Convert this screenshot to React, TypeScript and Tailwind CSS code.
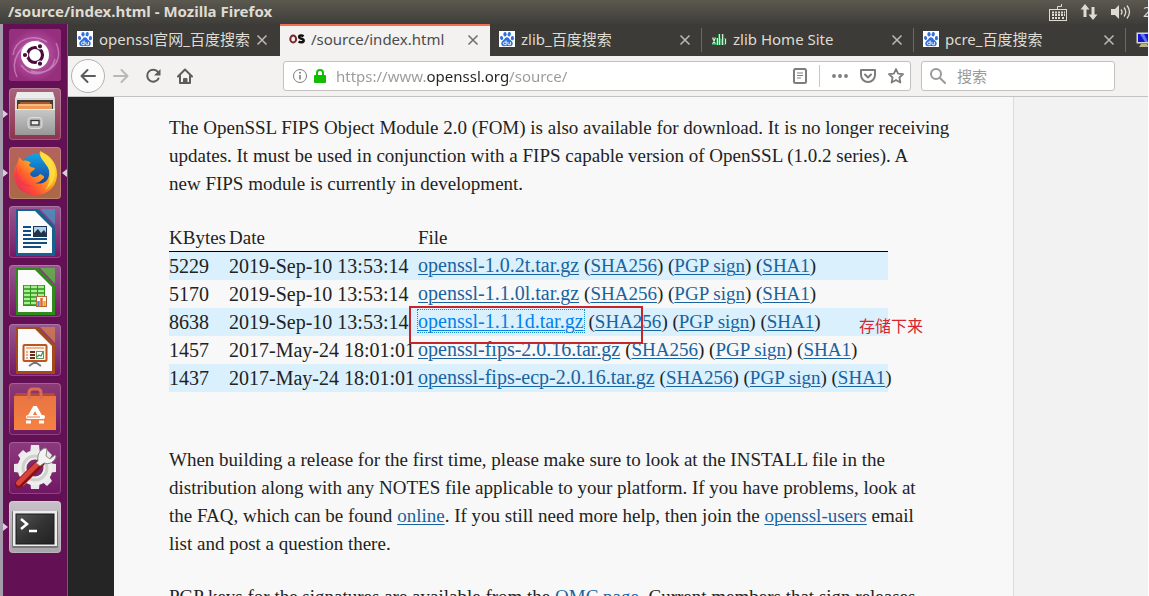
import React from "react";

const Paw = () => (
  <svg viewBox="0 0 16 16" className="size-4 shrink-0" aria-hidden="true">
    <rect width="16" height="16" fill="#fff" />
    <g fill="#2f6fe0">
      <ellipse cx="2.6" cy="7" rx="1.6" ry="2.1" transform="rotate(-12 2.6 7)" />
      <ellipse cx="6" cy="3.2" rx="1.6" ry="2.2" />
      <ellipse cx="10.2" cy="3.2" rx="1.6" ry="2.2" transform="rotate(10 10.2 3.2)" />
      <ellipse cx="13.4" cy="7.2" rx="1.6" ry="2.1" transform="rotate(8 13.4 7.2)" />
      <path d="M8 6.3c1.7 0 2.3 1.7 3.4 2.8 1.3 1.2 2.6 2.1 2.3 4-.3 1.800-1.800 2.300-3.200 2.100-1.700-.3-3.300-.3-5 0-1.500.2-2.900-.4-3.200-2.100-.3-1.900 1-2.800 2.200-4C5.700 8 6.200 6.300 8 6.300z" />
    </g>
    <path d="M7.200 9.500v4.200H5.700a1.300 1.300 0 0 1 0-2.600h1.500M8.900 11v1.900q0 .9 1 .9h1.500V11" fill="none" stroke="#fff" strokeWidth=".9" />
  </svg>
);

const OsMark = () => (
  <svg viewBox="0 0 16 16" className="size-4 shrink-0" aria-hidden="true">
    <ellipse cx="4.200" cy="8" rx="2.900" ry="3.500" fill="none" stroke="#7c2529" strokeWidth="2" />
    <path d="M14.600 5.300c-1.600-1.100-4.500-1.100-4.500.8 0 2.100 4.600 1.300 4.600 3.500 0 2.100-3.400 2.100-5.100.9" fill="none" stroke="#111" strokeWidth="2.500" />
  </svg>
);

const ZlibMark = () => (
  <svg viewBox="0 0 16 16" className="size-4 shrink-0" aria-hidden="true" fill="none">
    <path d="M1.500 6.500l3 7M4.500 6.500l-3 7M6.500 7v7M8.500 3v11M11.500 3v11M14.500 7v6" stroke="#d5ecd9" strokeWidth="1.200" />
    <path d="M.8 6.500h4M1 13.500h4M5.500 7v7M7.500 3v11M9.500 7v7M12.700 3v11M12 13.500h3M12 7.500h3M10.500 8v6" stroke="#3a9a58" strokeWidth="1" />
  </svg>
);

const MonitorMark = () => (
  <svg viewBox="0 0 16 16" className="size-4 shrink-0" aria-hidden="true">
    <rect x=".5" y=".5" width="15" height="11" fill="#d6d6cc" />
    <rect x="2" y="2" width="12" height="8" fill="#1414c8" />
    <path d="M4 2h4l4 8H9z" fill="#5b78ee" />
    <path d="M5 12h6l2 3H3z" fill="#b9b58c" />
  </svg>
);

const Cross = () => (
  <svg viewBox="0 0 12 12" className="size-3" fill="none" stroke="currentColor" strokeWidth="1.500" aria-hidden="true">
    <path d="M1.500 1.500l9 9M10.500 1.500l-9 9" />
  </svg>
);

type TabInfo = { title: string; mark: React.ReactNode; active?: boolean; line?: boolean };
const tabs: TabInfo[] = [
  { title: "openssl官网_百度搜索", mark: <Paw /> },
  { title: "/source/index.html", mark: <OsMark />, active: true },
  { title: "zlib_百度搜索", mark: <Paw />, line: true },
  { title: "zlib Home Site", mark: <ZlibMark />, line: true },
  { title: "pcre_百度搜索", mark: <Paw />, line: true },
];

function Tab({ title, mark, active, line }: TabInfo) {
  return (
    <div
      className={
        active
          ? "flex h-8 w-[210px] shrink-0 items-center bg-[#f3f2f1] pr-[7px] pl-[9px] text-[#4c4c4c] shadow-[inset_0_2px_0_#f07050]"
          : "flex h-8 w-[212px] shrink-0 items-center pr-2 pl-[9px] text-[#dfdbd2]"
      }
    >
      <button type="button" className="flex min-w-0 flex-1 items-center gap-1.5 pb-0.5 text-left text-[15px] leading-6 whitespace-nowrap">
        {mark}
        {title}
      </button>
      <button type="button" aria-label={"Close " + title} className="flex size-5 items-center justify-center opacity-80">
        <Cross />
      </button>
      <span className={line ? "ml-1.5 -mr-2 h-6 w-px bg-[#6b6963]" : "hidden"} />
    </div>
  );
}

const UbuntuIcon = () => (
  <svg viewBox="0 0 52 52" className="size-full">
    <defs>
      <radialGradient id="dash"><stop offset="0" stopColor="#c87abd" /><stop offset=".65" stopColor="#a84594" /><stop offset="1" stopColor="#962f7e" /></radialGradient>
    </defs>
    <rect width="52" height="52" fill="url(#dash)" />
    <path d="M4 26C6 10 24 4 38 13M47 14C56 32 40 48 22 42M8 48C0 32 12 12 30 12M46 30C42 46 22 50 12 36" fill="none" stroke="#e5b5dd" strokeOpacity=".5" strokeWidth="1.500" />
    <circle cx="26" cy="26" r="14" fill="#fff" />
    <circle cx="26" cy="26" r="7.500" fill="none" stroke="#4b0b3c" strokeWidth="3.200" />
    <g fill="#4b0b3c" stroke="#fff" strokeWidth="1.200">
      <circle cx="16" cy="26" r="2.700" /><circle cx="31" cy="17.300" r="2.700" /><circle cx="31" cy="34.700" r="2.700" />
    </g>
  </svg>
);

const FilesIcon = () => (
  <svg viewBox="0 0 52 52" className="size-full">
    <defs>
      <linearGradient id="cab" x2="0" y2="1"><stop offset="0" stopColor="#c9c9c9" /><stop offset="1" stopColor="#989898" /></linearGradient>
    </defs>
    <path d="M8 4h36l2 7H6z" fill="#ececec" />
    <path d="M6 10h40v11H6z" fill="#d9d9d9" />
    <path d="M8 12h36v9H8z" fill="#433d38" />
    <path d="M11 14h30v2H11z" fill="#a9582a" /><path d="M9 16h34v5H9z" fill="#ee9a56" /><path d="M10 17h32" stroke="#ffdcae" />
    <path d="M6 21h40v26H6z" fill="url(#cab)" />
    <path d="M6 21.500h40" stroke="#eee" />
    <rect x="19" y="29.500" width="14" height="11" rx="3" fill="#bdbdbd" stroke="#dedede" />
    <rect x="22" y="32.500" width="8" height="4.500" fill="#eee" stroke="#333" strokeWidth="1.300" />
  </svg>
);

const FirefoxIcon = () => (
  <svg viewBox="0 0 52 52" className="size-full">
    <defs>
      <linearGradient id="fox" x1="1" x2="0" y1="0" y2="1"><stop offset="0" stopColor="#fff04a" /><stop offset=".4" stopColor="#ffb01c" /><stop offset=".7" stopColor="#ff5034" /><stop offset="1" stopColor="#e01664" /></linearGradient>
      <linearGradient id="globe" x2="0" y2="1"><stop offset="0" stopColor="#13a3e6" /><stop offset="1" stopColor="#173b97" /></linearGradient>
    </defs>
    <circle cx="27" cy="23" r="16" fill="url(#globe)" />
    <path d="M31 4c9 4 17 11 17 23 0 12-9 21-21 21S5 40 5 27c0-5 2-9 4-12l1-5 4 4c3-1 6 0 8 2-3 1-2 3 0 4l4 1c-1 3-4 3-5 6 2 5 8 3 10 0 3 1 5 3 4 4-3 2-4 5-9 5 7 2 13-1 14-8 1-5-1-8-3-10l-1-2-2-3c-3-3-4-6-3-9z" fill="url(#fox)" />
    <path d="M8 15c-2 14 5 23 17 24-9 2-16 0-19-9" fill="#f13754" opacity=".7" />
    <path d="M32 5c7 4 14 10 14 22-1 8-5 13-10 16 7-9 6-21 0-27-4-4-5-7-4-11z" fill="#ffe348" opacity=".75" />
  </svg>
);

function PageIcon({ edge, fold, children }: { edge: string; fold: string; children: React.ReactNode }) {
  return (
    <svg viewBox="0 0 52 52" className="size-full">
      <path d="M7 3h22l17 17v30H7z" fill={edge} />
      <path d="M30 3h16v17z" fill={fold} opacity=".7" />
      <path d="M9 5h17l17 17v25H9z" fill="#fbfbfb" />
      <path d="M30 3l16 17" stroke="#8b3b80" strokeWidth="1.500" />
      {children}
    </svg>
  );
}

const WriterIcon = () => (
  <PageIcon edge="#17618f" fold="#3a9cca">
    <path d="M14 21h8M14 25h8M14 29h8M14 33h24M14 37h24M14 41h18" stroke="#124e80" strokeWidth="2" />
    <rect x="24.500" y="20.500" width="13" height="10" fill="#a9d4f0" stroke="#235" />
    <path d="M25 30v-3l4-4 3 4 3-3 2 3v3z" fill="#234" />
  </PageIcon>
);
const CalcIcon = () => (
  <PageIcon edge="#2f8c1b" fold="#53c737">
    <rect x="14" y="20" width="22" height="21" fill="#2c941b" />
    <path d="M15 22h6M22 22h6M29 22h6M15 26h6M22 26h6M29 26h6M15 30h6M22 30h6M29 30h6M15 34h6M22 34h6M15 38h6M22 38h6" stroke="#a9ef91" strokeWidth="2.500" />
    <rect x="27.500" y="31.500" width="10" height="10" fill="#fff" stroke="#b5683e" />
    <path d="M29.500 41v-5" stroke="#3298dd" strokeWidth="2.500" /><path d="M32.500 41v-8" stroke="#ed641d" strokeWidth="2.500" /><path d="M35.500 41v-5" stroke="#f1a62e" strokeWidth="2.500" />
  </PageIcon>
);
const ImpressIcon = () => (
  <PageIcon edge="#a44a18" fold="#dc8242">
    <rect x="14.500" y="21" width="23" height="16" rx="1" fill="#fff4ec" stroke="#bb571f" strokeWidth="2" />
    <path d="M17 24h18" stroke="#e9a273" strokeWidth="1.500" /><path d="M21 28h5M21 31h5M21 34h5" stroke="#6b2b15" strokeWidth="1.800" /><path d="M17 28h2M17 31h2M17 34h2" stroke="#c86a32" />
    <rect x="27.500" y="27.500" width="7" height="7" fill="#fff" stroke="#68946b" /><path d="M28 33l2-2 2 1 2-4" fill="none" stroke="#2d9440" strokeWidth="1.200" />
    <path d="M26 38v2M26 38l-6 4M26 38l6 4" stroke="#777" strokeWidth="2" />
  </PageIcon>
);

const StoreIcon = () => (
  <svg viewBox="0 0 52 52" className="size-full">
    <defs><linearGradient id="bag" x2="0" y2="1"><stop offset="0" stopColor="#e87443" /><stop offset="1" stopColor="#f68240" /></linearGradient></defs>
    <path d="M7 10h38l2 4H5z" fill="#b64b31" /><path d="M5 13h42v34H5z" fill="url(#bag)" />
    <path d="M20 16v-6q0-4 4-4h4q4 0 4 4v6" fill="none" stroke="#d96d50" strokeWidth="3" />
    <path d="M21 33l5-9 5 9" fill="none" stroke="#fff" strokeWidth="4" strokeLinejoin="bevel" />
    <path d="M19 34h15" stroke="#fff" strokeWidth="4" strokeLinecap="round" /><path d="M18 34h13" stroke="#ec7440" strokeWidth="1" />
    <path d="M17 39h5M30 39h5" stroke="#fff" strokeWidth="3" />
  </svg>
);

const SettingsIcon = () => (
  <svg viewBox="0 0 52 52" className="size-full">
    <g fill="#e9e9e7">
      <path d="M22 3h8l1 9H21zM22 47h8l1-9H21zM5 22v8l9 1V21zM47 22v8l-9 1V21zM9 13l5-5 7 6-7 7zM43 13l-5-5-7 6 7 7zM9 39l5 5 7-6-7-7zM43 39l-5 5-7-6 7-7z" />
    </g>
    <circle cx="26" cy="26" r="13" fill="none" stroke="#eeeeec" strokeWidth="9" />
    <circle cx="26" cy="26" r="12" fill="none" stroke="#d0d0cf" strokeWidth="3" />
    <path d="M10 42l22-22" stroke="#8b1110" strokeWidth="8.500" strokeLinecap="round" />
    <path d="M9.500 41l22-22" stroke="#d9453e" strokeWidth="5" strokeLinecap="round" />
    <path d="M29 19c-1-5 1-11 7-13l2 1-1 7 4 3 5-4 1 1c-1 6-7 9-12 7l-4 3-4-3z" fill="#f3f3f1" stroke="#8a8a88" />
  </svg>
);

const TerminalIcon = () => (
  <svg viewBox="0 0 52 52" className="size-full">
    <defs><linearGradient id="scr" x1="0" y1="0" x2="1" y2="1"><stop offset="0" stopColor="#565656" /><stop offset=".5" stopColor="#333" /><stop offset="1" stopColor="#222" /></linearGradient></defs>
    <rect x="3" y="10" width="46" height="37" rx="1" fill="#777" /><rect x="4" y="10" width="44" height="35" fill="#ededed" />
    <rect x="7" y="13" width="38" height="30" fill="url(#scr)" stroke="#191919" />
    <path d="M12 18l6 5-6 5M20 30h8" fill="none" stroke="#fff" strokeWidth="2.500" />
  </svg>
);

const apps = [
  { name: "Dash", icon: <UbuntuIcon />, tile: "bg-[#a04392]" },
  { name: "Files", icon: <FilesIcon />, tile: "bg-linear-to-b from-[#a6647c] to-[#8c3450]", left: true },
  { name: "Firefox", icon: <FirefoxIcon />, tile: "bg-linear-to-b from-[#b3625e] to-[#ab6846]", left: true, right: true },
  { name: "Writer", icon: <WriterIcon />, tile: "bg-linear-to-b from-[#97578f] to-[#741666]" },
  { name: "Calc", icon: <CalcIcon />, tile: "bg-linear-to-b from-[#97578f] to-[#741666]" },
  { name: "Impress", icon: <ImpressIcon />, tile: "bg-linear-to-b from-[#97578f] to-[#741666]" },
  { name: "Software", icon: <StoreIcon />, tile: "bg-linear-to-b from-[#8d3c77] to-[#6c1560]" },
  { name: "Settings", icon: <SettingsIcon />, tile: "bg-linear-to-b from-[#8d397f] to-[#711665]" },
  { name: "Terminal", icon: <TerminalIcon />, tile: "bg-linear-to-b from-[#c6c2c7] to-[#a9a3aa]", left: true },
];

function Launcher() {
  return (
    <nav className="flex w-[68px] shrink-0 flex-col gap-[7px] border-r border-l-3 border-r-[#855080] border-l-[#a49cac] bg-[#641054] pt-[5px]">
      {apps.map((a) => (
        <div key={a.name} className="flex items-center">
          <svg viewBox="0 0 6 8" className={a.left ? "h-2 w-1.5 text-[#dccbdc]" : "h-2 w-1.5 text-transparent"} aria-hidden="true">
            <path d="M0 0l5 4-5 4z" fill="currentColor" />
          </svg>
          <button type="button" aria-label={a.name} className={"size-[52px] overflow-hidden rounded-[4px] ring-1 ring-white/20 ring-inset " + a.tile}>
            {a.icon}
          </button>
          <svg viewBox="0 0 6 8" className={a.right ? "h-2 w-1.5 text-[#dccbdc]" : "h-2 w-1.5 text-transparent"} aria-hidden="true">
            <path d="M6 0L1 4l5 4z" fill="currentColor" />
          </svg>
        </div>
      ))}
    </nav>
  );
}

function TitleBar() {
  return (
    <header className="flex h-6 shrink-0 items-center justify-between overflow-hidden bg-linear-to-b from-[#5b594f] to-[#3e3d39] pl-2 text-[#dfdbd2]">
      <h1 className="pb-0.5 text-[15px] leading-5 font-bold whitespace-nowrap">/source/index.html - Mozilla Firefox</h1>
      <div className="flex items-center">
        <svg viewBox="0 0 20 20" className="mr-3 size-5" fill="none" stroke="currentColor" aria-hidden="true">
          <path d="M9.500 7V4.500h4V2" /><rect x="1.500" y="7.500" width="17" height="11" />
          <path d="M4 10.500h13M4 13h13M4 16h2M7 16h6M14 16h3" strokeWidth="1.800" strokeDasharray="2 1" />
        </svg>
        <svg viewBox="0 0 18 18" className="mr-[13px] size-[18px]" fill="currentColor" aria-hidden="true">
          <path d="M5 1L.5 6.500h3V14h3V6.500h3zM13 17l4.500-5.500h-3V4h-3v7.500h-3z" />
        </svg>
        <svg viewBox="0 0 20 18" className="mr-3 h-[18px] w-5" fill="none" stroke="currentColor" strokeWidth="1.300" aria-hidden="true">
          <path d="M0 6h4l4-4v14l-4-4H0z" fill="currentColor" stroke="none" />
          <path d="M10 6.500q2 2.500 0 5M13 4.500q3.500 4.500 0 9M16 2.500q5 6.500 0 13" />
        </svg>
        <span className="w-[5px] overflow-hidden text-sm">2</span>
      </div>
    </header>
  );
}

function ToolBar() {
  return (
    <div className="flex h-[41px] shrink-0 items-center border-b border-[#c4c3c1] bg-[#f3f2f1] pr-[33px] pl-[3px] text-[#5c5c5c]">
      <button type="button" aria-label="Back" className="flex size-[34px] items-center justify-center rounded-full border border-[#b3b2b0] bg-[#fcfcfc]">
        <svg viewBox="0 0 16 16" className="size-4" fill="none" stroke="currentColor" strokeWidth="2" strokeLinecap="round" strokeLinejoin="round"><path d="M15 8H1.500M7.500 2l-6 6 6 6" /></svg>
      </button>
      <button type="button" aria-label="Forward" className="ml-2 text-[#b9b8b7]">
        <svg viewBox="0 0 16 16" className="size-4" fill="none" stroke="currentColor" strokeWidth="2" strokeLinecap="round" strokeLinejoin="round"><path d="M1 8h13.500M8.500 2l6 6-6 6" /></svg>
      </button>
      <button type="button" aria-label="Reload" className="ml-4">
        <svg viewBox="0 0 16 16" className="size-4" fill="none" stroke="currentColor" strokeWidth="2"><path d="M13.500 10.500A6 6 0 1 1 13 4" strokeLinecap="round" /><path d="M15.500 1v6.500H9z" fill="currentColor" stroke="none" /></svg>
      </button>
      <button type="button" aria-label="Home" className="ml-4">
        <svg viewBox="0 0 16 16" className="size-4" fill="none" stroke="currentColor" strokeWidth="2" strokeLinecap="round" strokeLinejoin="round"><path d="M1 8.500l7-7 7 7M3 8v7h10V8" /><path d="M7 15v-4h2.500v4" fill="currentColor" /></svg>
      </button>
      <div className="ml-[90px] flex h-[30px] min-w-0 flex-1 items-center rounded-[3px] border border-[#c2c1bf] bg-white px-2 text-[#7d7d7d]">
        <svg viewBox="0 0 16 16" className="size-4 shrink-0" fill="none" stroke="currentColor"><circle cx="8" cy="8" r="6.500" /><path d="M8 7v4.500" strokeWidth="1.600" /><circle cx="8" cy="4.700" r="1" fill="currentColor" stroke="none" /></svg>
        <svg viewBox="0 0 12 14" className="ml-1.5 h-[14px] w-3 shrink-0"><path d="M3 7V4a3 3 0 0 1 6 0v3" fill="none" stroke="#12bc00" strokeWidth="2" /><rect y="6" width="12" height="8" rx="1" fill="#12bc00" /></svg>
        <input
          aria-label="Address"
          defaultValue="https://www.openssl.org/source/"
          className="ml-[10px] min-w-0 flex-1 bg-[linear-gradient(90deg,#999_91px,#222_91px,#222_172px,#999_172px)] bg-clip-text text-[15px] leading-6 text-transparent outline-none"
        />
        <svg viewBox="0 0 14 16" className="h-4 w-[14px]" fill="none" stroke="currentColor"><rect x="1" y="1" width="12" height="14" rx="1.500" strokeWidth="2" /><path d="M4 5h6M4 7.500h6M4 10h4" /></svg>
        <span className="mx-3 h-[22px] w-px bg-[#c8c8c8]" />
        <svg viewBox="0 0 16 4" className="h-1 w-4" fill="currentColor"><circle cx="2" cy="2" r="1.900" /><circle cx="8" cy="2" r="1.900" /><circle cx="14" cy="2" r="1.900" /></svg>
        <svg viewBox="0 0 16 16" className="ml-3 size-4" fill="none" stroke="currentColor" strokeWidth="2" strokeLinecap="round" strokeLinejoin="round"><path d="M1 2h14v5a7 7 0 0 1-14 0zM5 6.500l3 3 3-3" /></svg>
        <svg viewBox="0 0 16 16" className="ml-3 -mr-[2px] size-4" fill="none" stroke="currentColor" strokeWidth="1.800" strokeLinejoin="round"><path d="M8 1l2.100 4.600 5 .5-3.700 3.400 1 5L8 12l-4.400 2.500 1-5L.9 6.100l5-.5z" /></svg>
      </div>
      <label className="ml-[10px] flex h-[30px] w-[194px] shrink-0 items-center gap-[11px] rounded-[3px] border border-[#c2c1bf] bg-white px-2">
        <svg viewBox="0 0 16 16" className="size-4 shrink-0" fill="none" stroke="#999" strokeWidth="2" strokeLinecap="round"><circle cx="6" cy="6" r="5" /><path d="M10 10l5 5" /></svg>
        <input aria-label="搜索" placeholder="搜索" className="min-w-0 flex-1 text-[15px] leading-6 outline-none placeholder:text-[#999]" />
      </label>
    </div>
  );
}

function Link({ children, focused }: { children: React.ReactNode; focused?: boolean }) {
  return (
    <a
      href="#"
      className={
        focused
          ? "text-[#0181eb] underline decoration-1 underline-offset-2 outline-1 outline-[#1f88c9] outline-dotted"
          : "text-[#1863a1] underline decoration-1 underline-offset-2"
      }
    >
      {children}
    </a>
  );
}

const files = [
  { size: "5229", date: "2019-Sep-10 13:53:14", file: "openssl-1.0.2t.tar.gz" },
  { size: "5170", date: "2019-Sep-10 13:53:14", file: "openssl-1.1.0l.tar.gz" },
  { size: "8638", date: "2019-Sep-10 13:53:14", file: "openssl-1.1.1d.tar.gz", marked: true },
  { size: "1457", date: "2017-May-24 18:01:01", file: "openssl-fips-2.0.16.tar.gz" },
  { size: "1437", date: "2017-May-24 18:01:01", file: "openssl-fips-ecp-2.0.16.tar.gz" },
];

function Article() {
  return (
    <main className="min-w-0 flex-1 bg-[#f8f8f8] pt-[17px] pl-[55px] font-['Liberation_Serif','Noto_Sans_CJK_SC',serif] text-[19px] leading-7 whitespace-nowrap text-[#222]">
      <p>
        The OpenSSL FIPS Object Module 2.0 (FOM) is also available for download. It is no longer receiving<br />
        updates. It must be used in conjunction with a FIPS capable version of OpenSSL (1.0.2 series). A<br />
        new FIPS module is currently in development.
      </p>
      <div className="relative mt-[27px] w-[719px]">
        <table className="w-full table-fixed border-collapse text-left">
          <colgroup>
            <col className="w-[60px]" />
            <col className="w-[189px]" />
            <col />
          </colgroup>
          <thead>
            <tr className="border-b border-black leading-[26px]">
              <th className="p-0 font-normal">KBytes</th>
              <th className="p-0 font-normal">Date</th>
              <th className="p-0 font-normal">File</th>
            </tr>
          </thead>
          <tbody className="text-[20px] leading-[26px]">
            {files.map((f) => (
              <tr key={f.file} className="h-7 odd:bg-[#daf0fc]">
                <td className="p-0">{f.size}</td>
                <td className="p-0">{f.date}</td>
                <td className="p-0">
                  <Link focused={f.marked}>{f.file}</Link>{" "}
                  <span className="text-[19px]">
                    (<Link>SHA256</Link>) (<Link>PGP sign</Link>) (<Link>SHA1</Link>)
                  </span>
                </td>
              </tr>
            ))}
          </tbody>
        </table>
        <div className="absolute top-[81px] left-[240px] h-[38px] w-[234px] border-2 border-[#c4262c]" />
        <span className="absolute top-[87px] left-[690px] font-['Noto_Sans_CJK_SC',sans-serif] text-base leading-[26px] text-[#d9232e]">存储下来</span>
      </div>
      <p className="mt-[54px]">
        When building a release for the first time, please make sure to look at the INSTALL file in the<br />
        distribution along with any NOTES file applicable to your platform. If you have problems, look at<br />
        the FAQ, which can be found <Link>online</Link>. If you still need more help, then join the <Link>openssl-users</Link> email<br />
        list and post a question there.
      </p>
      <p className="mt-[25px]">
        PGP keys for the signatures are available from the <Link>OMC page</Link>. Current members that sign releases
      </p>
    </main>
  );
}

export default function App() {
  return (
    <div className="flex h-screen flex-col overflow-hidden border-r border-white bg-[#3d3c38] font-['Noto_Sans','Noto_Sans_CJK_SC',sans-serif]">
      <TitleBar />
      <div className="flex min-h-0 flex-1">
        <Launcher />
        <div className="flex min-w-0 flex-1 flex-col">
          <div className="flex h-8 shrink-0 overflow-hidden bg-[#3c3b37]">
            {tabs.map((t) => (
              <Tab key={t.title} {...t} />
            ))}
            <div className="flex items-center pl-[10px]">
              <MonitorMark />
            </div>
          </div>
          <ToolBar />
          <div className="flex min-h-0 flex-1 overflow-hidden">
            <div className="w-[46px] shrink-0 bg-[#252525]" />
            <Article />
            <aside className="w-[135px] shrink-0 border-l border-[#dcdcdc] bg-[#f2f2f2]" />
          </div>
        </div>
      </div>
    </div>
  );
}
